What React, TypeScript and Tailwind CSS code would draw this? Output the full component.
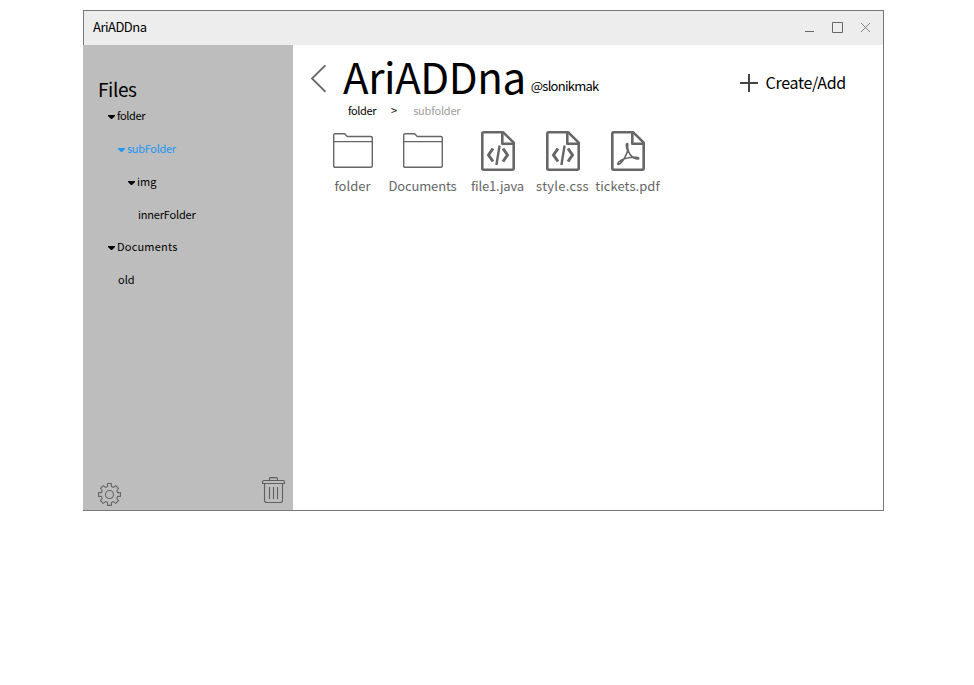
import type { ReactNode } from "react";

type TreeRow = { label: string; indent: string; tracking: string; caret: boolean; active?: boolean; height: string };

const tree: TreeRow[] = [
  { label: "folder", indent: "pl-[25px]", tracking: "tracking-[-0.4px]", caret: true, height: "h-[33px]" },
  { label: "subFolder", indent: "pl-[35px]", tracking: "tracking-[-0.3px]", caret: true, active: true, height: "h-[33px]" },
  { label: "img", indent: "pl-[45px]", tracking: "tracking-normal", caret: true, height: "h-[33px]" },
  { label: "innerFolder", indent: "pl-[55px]", tracking: "tracking-[-0.2px]", caret: false, height: "h-[32px]" },
  { label: "Documents", indent: "pl-[25px]", tracking: "tracking-[0.2px]", caret: true, height: "h-[33px]" },
  { label: "old", indent: "pl-[35px]", tracking: "tracking-normal", caret: false, height: "h-[33px]" },
];

function Caret() {
  return (
    <svg width="7" height="4" viewBox="0 0 7 4" className="mt-[3px] mr-[2px] shrink-0" fill="currentColor">
      <path d="M0 0h7v1L4 4H3L0 1z" />
    </svg>
  );
}

function Gear() {
  const teeth =
    "M9.6 .5h3.8v3l2 .9 2.4-1.8 2.7 2.7-1.7 2.4.8 1.9h2.9v3.8h-2.9l-.8 2 1.7 2.3-2.7 2.7-2.4-1.8-2 .9v2.9H9.6v-2.9l-2-.9-2.4 1.8-2.7-2.7 1.7-2.3-.8-2H.5V9.6h2.9l.8-1.9-1.7-2.4 2.7-2.7 2.4 1.8 2-.9z";
  return (
    <svg width="23" height="23" viewBox="0 0 23 23" fill="none" stroke="#666" strokeWidth="1.1" strokeLinejoin="round">
      <path d={teeth} />
      <circle cx="11.5" cy="11.5" r="4" />
    </svg>
  );
}

function Trash() {
  return (
    <svg width="23" height="26" viewBox="0 0 23 26" fill="none" stroke="#5f5f5f" strokeWidth="1.1">
      <path d="M7.500 3.500v-1.500q0-1.400 1.300-1.400h5.400q1.300 0 1.300 1.400v1.500" />
      <path d="M.6 6.500v-1.500q0-1.500 1.400-1.500h19q1.400 0 1.400 1.500v1.500z" />
      <path d="M2.500 6.500v17q0 2 2 2h14q2 0 2-2v-17" />
      <path d="M7.500 10v12M11.500 10v12M15.500 10v12" />
    </svg>
  );
}

function Folder() {
  return (
    <svg width="40" height="35" viewBox="0 0 40 35" fill="none" stroke="#666" strokeWidth="1.400" strokeLinejoin="round">
      <path d="M.7 32.800V2.300Q.7 .8 2.200 .8h8.900q.8 0 1.300.7l1.300 1.500q.4.500 1.200.5h22.900q1.500 0 1.500 1.500v27.800q0 1.500-1.500 1.500H2.200q-1.500 0-1.500-1.500z" />
      <path d="M.7 8.600h38.600" />
    </svg>
  );
}

function Sheet({ children }: { children: ReactNode }) {
  return (
    <svg width="34" height="40" viewBox="0 0 34 40" fill="none" stroke="#666" strokeWidth="2.600" strokeLinejoin="round">
      <path d="M2.700 1.300h19.600l10.400 10.400v25.600q0 1.400-1.400 1.400H2.700q-1.400 0-1.400-1.400V2.700q0-1.400 1.400-1.400z" />
      <path d="M21.300 1.500v11.200h11.200" />
      {children}
    </svg>
  );
}

function CodeFile() {
  return (
    <Sheet>
      <path d="M12 17.500L7.500 24l4.500 6.500M22 17.500l4.500 6.500-4.500 6.500" strokeWidth="3" strokeLinejoin="miter" />
      <path d="M18.600 14.500L15.400 34" strokeWidth="2.400" />
    </Sheet>
  );
}

function PdfFile() {
  return (
    <Sheet>
      <path
        d="M16.300 12.500c-1.500 0-1 3.500.3 7.500-1.600 4.500-4 9-6.300 11.500-2 2.200-4 2.300-3.600 1 .6-2.200 6-5.300 12.300-6 5-.6 8.700-.2 8.800.8.1 1.200-4.300.6-7-2-2.200-2-4.100-6-4.200-9.500 0-1.500.5-3.300-.3-3.300z"
        strokeWidth="1.600"
      />
    </Sheet>
  );
}

const files = [
  { name: "folder", icon: <Folder />, box: "w-[70px]", iconBox: "pt-[2px]", tracking: "tracking-normal" },
  { name: "Documents", icon: <Folder />, box: "w-[70px]", iconBox: "pt-[2px]", tracking: "tracking-[-0.15px]" },
  { name: "file1.java", icon: <CodeFile />, box: "w-[80px]", iconBox: "", tracking: "tracking-[-0.15px]" },
  { name: "style.css", icon: <CodeFile />, box: "w-[50px]", iconBox: "", tracking: "tracking-[0.25px]" },
  { name: "tickets.pdf", icon: <PdfFile />, box: "w-[80px]", iconBox: "", tracking: "tracking-[0.05px]" },
];

export default function App() {
  return (
    <div className="h-[685px] w-[974px] bg-white pt-[10px] pl-[83px] font-['Noto_Sans_CJK_SC',sans-serif] text-black">
      <div className="flex h-[501px] w-[801px] flex-col border-t border-r border-b border-[#777]">
        <header className="flex h-[34px] shrink-0 items-center justify-between border-l border-[#777] bg-[#ededed] pr-[13px] pl-[9px]">
          <span className="pb-[2px] text-[13px] leading-[18px] tracking-[-0.5px]">AriADDna</span>
          <div className="flex items-center gap-[18px]">
            <svg width="9" height="11" viewBox="0 0 9 11" stroke="#666" className="-mt-px">
              <path d="M0 9.500h9" />
            </svg>
            <svg width="11" height="11" viewBox="0 0 11 11" fill="none" stroke="#666" className="-mt-px">
              <path d="M.5 .5h10v10H.5z" />
            </svg>
            <svg width="9" height="9" viewBox="0 0 9 9" stroke="#777" strokeWidth=".9" className="-mt-px">
              <path d="M0 0l9 9M9 0L0 9" />
            </svg>
          </div>
        </header>
        <div className="flex min-h-0 flex-1">
          <aside className="flex w-[210px] shrink-0 flex-col bg-[#bdbdbd]">
            <h2 className="mt-[30px] pl-[15px] text-[19px] leading-[28px] tracking-[-0.4px]">Files</h2>
            <ul className="-mt-[4px] text-[11px] leading-[16px]">
              {tree.map((r) => (
                <li key={r.label} className={`flex items-center ${r.height} ${r.indent} ${r.active ? "text-[#2196f3]" : ""}`}>
                  {r.caret && <Caret />}
                  <span className={`-mt-px whitespace-nowrap ${r.tracking}`}>{r.label}</span>
                </li>
              ))}
            </ul>
            <div className="mt-auto flex items-end justify-between pr-[8px] pb-[4px] pl-[15px]">
              <Gear />
              <div className="mb-[3px]">
                <Trash />
              </div>
            </div>
          </aside>
          <main className="flex min-w-0 flex-1 flex-col bg-white">
            <div className="flex h-[58px] items-start">
              <svg width="16" height="28" viewBox="0 0 16 28" fill="none" stroke="#666" strokeWidth="1.800" className="mt-[20px] ml-[17px] shrink-0">
                <path d="M15.500 .2L2 13.500 15.500 26.800" />
              </svg>
              <h1 className="mt-[9px] ml-[17px] text-[42px] leading-[44px] tracking-[-0.4px]">AriADDna</h1>
              <span className="mt-[32px] ml-[5px] text-[13px] leading-[18px] tracking-[-0.75px]">@slonikmak</span>
              <button className="mt-[26px] mr-[37px] ml-auto flex items-start gap-[8px] text-[16px] leading-[22px] tracking-[-0.3px]">
                <svg width="18" height="18" viewBox="0 0 18 18" stroke="#444" strokeWidth="2" className="mt-[3px]">
                  <path d="M0 9h18M9 0v18" />
                </svg>
                Create/Add
              </button>
            </div>
            <nav className="flex h-[15px] pl-[55px] text-[11px] leading-[15px]">
              <span className="tracking-[-0.4px]">folder</span>
              <span className="ml-[15px]">&gt;</span>
              <span className="ml-[16px] tracking-[-0.2px] text-[#9e9e9e]">subfolder</span>
            </nav>
            <div className="mt-[13px] flex pl-[25px] text-[13px] leading-[18px] text-[#666]">
              {files.map((f) => (
                <div key={f.name} className={`flex flex-col items-center ${f.box}`}>
                  <div className={`h-[46px] ${f.iconBox}`}>{f.icon}</div>
                  <span className={`mr-px whitespace-nowrap ${f.tracking}`}>{f.name}</span>
                </div>
              ))}
            </div>
          </main>
        </div>
      </div>
    </div>
  );
}
